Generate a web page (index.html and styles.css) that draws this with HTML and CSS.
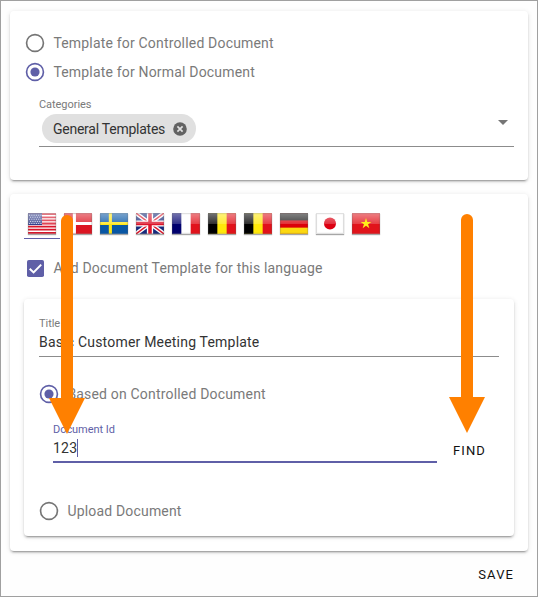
FILE: index.html
```html
<!DOCTYPE html>
<html lang="en">
<head>
<meta charset="utf-8">
<title>Document template</title>
<link rel="stylesheet" href="styles.css">
</head>
<body>
<svg class="defs" width="0" height="0" aria-hidden="true">
  <defs>
    <linearGradient id="gloss" x1="0" y1="0" x2="0" y2="1">
      <stop offset="0" stop-color="#fff" stop-opacity=".46"/>
      <stop offset=".5" stop-color="#fff" stop-opacity=".2"/>
      <stop offset=".5" stop-color="#fff" stop-opacity="0"/>
    </linearGradient>
    <g id="sheen">
      <rect width="27" height="20" fill="url(#gloss)"/>
      <rect x=".5" y=".5" width="26" height="19" fill="none" stroke="#666" stroke-opacity=".22"/>
    </g>
    <symbol id="radio-off" viewBox="0 0 24 24"><circle cx="12" cy="12" r="9.2" fill="none" stroke="currentColor" stroke-width="1.8"/></symbol>
    <symbol id="radio-on" viewBox="0 0 24 24"><circle cx="12" cy="12" r="9.2" fill="none" stroke="currentColor" stroke-width="1.8"/><circle cx="12" cy="12" r="5" fill="currentColor"/></symbol>
  </defs>
</svg>
<main class="frame">
  <section class="card scope">
    <label class="option"><svg class="radio"><use href="#radio-off"/></svg><span>Template for Controlled Document</span></label>
    <label class="option on"><svg class="radio"><use href="#radio-on"/></svg><span>Template for Normal Document</span></label>
    <div class="categories">
      <div class="label">Categories</div>
      <div class="select">
        <span class="chip"><span>General Templates</span><svg class="remove" viewBox="0 0 14 14"><circle cx="7" cy="7" r="6.8" fill="#626262"/><path d="M4.4 4.4l5.2 5.2M9.6 4.4l-5.2 5.2" stroke="#e0e0e0" stroke-width="1.7"/></svg></span>
        <svg class="caret" viewBox="0 0 10 5"><path d="M0 0h10L5 5z" fill="#757575"/></svg>
      </div>
    </div>
  </section>

  <section class="card languages">
    <nav class="tabs">
      <span class="tab active"><svg class="flag" viewBox="0 0 27 20"><rect width="27" height="20" fill="#fff"/><path d="M0 1h27M0 4h27M0 7h27M0 10h27M0 13h27M0 16h27M0 19h27" stroke="#d9162a" stroke-width="1.7"/><rect width="13.5" height="11.5" fill="#34408c"/><path d="M1 2h12M2 4h11M1 6h12M2 8h11M1 10h12" stroke="#c9cde6" stroke-width="1" stroke-dasharray="1 1.2"/><use href="#sheen"/></svg></span>
      <span class="tab"><svg class="flag" viewBox="0 0 27 20"><rect width="27" height="20" fill="#dc1522"/><path d="M10 0v20M0 10h27" stroke="#fff" stroke-width="3"/><use href="#sheen"/></svg></span>
      <span class="tab"><svg class="flag" viewBox="0 0 27 20"><rect width="27" height="20" fill="#0857a5"/><path d="M10 0v20M0 10h27" stroke="#ffe616" stroke-width="3"/><use href="#sheen"/></svg></span>
      <span class="tab"><svg class="flag" viewBox="0 0 27 20"><rect width="27" height="20" fill="#172a7c"/><path d="M0 0l27 20M27 0L0 20" stroke="#fff" stroke-width="4"/><path d="M0 0l27 20M27 0L0 20" stroke="#d9182c" stroke-width="1.5"/><path d="M13.5 0v20M0 10h27" stroke="#fff" stroke-width="6"/><path d="M13.5 0v20M0 10h27" stroke="#dc142a" stroke-width="3.4"/><use href="#sheen"/></svg></span>
      <span class="tab"><svg class="flag" viewBox="0 0 27 20"><rect width="27" height="20" fill="#fff"/><rect width="9" height="20" fill="#00006e"/><rect x="18" width="9" height="20" fill="#e1121b"/><use href="#sheen"/></svg></span>
      <span class="tab"><svg class="flag" viewBox="0 0 27 20"><rect width="27" height="20" fill="#ffe80a"/><rect width="9" height="20"/><rect x="18" width="9" height="20" fill="#e1121b"/><use href="#sheen"/></svg></span>
      <span class="tab"><svg class="flag" viewBox="0 0 27 20"><rect width="27" height="20" fill="#ffe80a"/><rect width="9" height="20"/><rect x="18" width="9" height="20" fill="#e1121b"/><use href="#sheen"/></svg></span>
      <span class="tab"><svg class="flag" viewBox="0 0 27 20"><rect width="27" height="20" fill="#db0009"/><rect width="27" height="7" fill="#1b1b1b"/><rect y="14" width="27" height="6" fill="#fcd810"/><use href="#sheen"/></svg></span>
      <span class="tab"><svg class="flag" viewBox="0 0 27 20"><rect width="27" height="20" fill="#fff"/><circle cx="13.5" cy="10" r="5.8" fill="#dc0012"/><use href="#sheen"/></svg></span>
      <span class="tab"><svg class="flag" viewBox="0 0 27 20"><rect width="27" height="20" fill="#e1141b"/><use href="#sheen"/><path d="M13.5 4.7l1.25 3.75h3.95l-3.2 2.35 1.25 3.8-3.25-2.35-3.25 2.35 1.25-3.8-3.2-2.35h3.95z" fill="#fff01b"/></svg></span>
    </nav>
    <label class="check"><svg class="box" viewBox="0 0 17 17"><rect width="17" height="17" rx="1.8" fill="#5f5fa7"/><path d="M2.7 8.7l3.9 3.7 7.6-7.8" fill="none" stroke="#fff" stroke-width="2"/></svg><span>Add Document Template for this language</span></label>

    <div class="card details">
      <div class="title-field">
        <div class="label">Title</div>
        <div class="value">Basic Customer Meeting Template</div>
      </div>
      <label class="option on based"><svg class="radio"><use href="#radio-on"/></svg><span>Based on Controlled Document</span></label>
      <div class="lookup">
        <div class="id-field">
          <div class="label">Document Id</div>
          <div class="value">123<i class="cursor"></i></div>
        </div>
        <span class="button">FIND</span>
      </div>
      <label class="option upload"><svg class="radio"><use href="#radio-off"/></svg><span>Upload Document</span></label>
    </div>
  </section>
  <footer class="actions"><span class="button">SAVE</span></footer>

  <svg class="arrow arrow-left" viewBox="0 0 36 219"><path d="M12 6a6 6 0 0 1 12 0v177h12L18 219 0 183h12z" fill="#ff8000"/></svg>
  <svg class="arrow arrow-right" viewBox="0 0 36 219"><path d="M12 6a6 6 0 0 1 12 0v177h12L18 219 0 183h12z" fill="#ff8000"/></svg>
</main>
</body>
</html>
```
FILE: styles.css
```css
* { box-sizing: border-box; }
body { margin: 0; font-family: Roboto, "Liberation Sans", sans-serif; font-size: 14px; color: #7a7a7a; background: #fff; }
svg { display: block; flex: none; }
.defs { position: absolute; }
.frame { position: relative; width: 538px; height: 597px; border: 1px solid #a0a0a0; padding: 10px 9px 0; background: #fefefe; }
.card { background: #fff; border-radius: 4px; box-shadow: 0 3px 1px -2px rgba(0,0,0,.2), 0 2px 2px 0 rgba(0,0,0,.14), 0 1px 5px 0 rgba(0,0,0,.12); }
.scope { height: 169px; padding: 17px 14px 0; }
.option { display: flex; align-items: center; gap: 7px; height: 29px; padding-left: .4px; letter-spacing: .18px; white-space: nowrap; }
.radio { width: 22px; height: 22px; color: #757575; }
.on .radio { color: #5f5fa7; }
.label { font-size: 11px; line-height: 14px; letter-spacing: -.05px; white-space: nowrap; }
.categories { margin: 12px 0 0 15px; }
.select { display: flex; justify-content: space-between; align-items: flex-start; height: 35px; padding: 2px 6px 0 3px; border-bottom: 1px solid #8c8c8c; }
.chip { display: flex; align-items: center; justify-content: space-between; width: 154px; height: 29px; padding: 0 8.6px 0 11px; border-radius: 15px; background: #e0e0e0; color: #333; letter-spacing: -.25px; white-space: nowrap; }
.remove { width: 14px; height: 14px; }
.caret { width: 10px; height: 5px; margin-top: 6px; }
.languages { height: 357px; margin-top: 14px; padding: 17px 14px 0; }
.tabs { display: flex; height: 28px; }
.tab { width: 36px; height: 28px; padding: 2px 0 0 4.4px; }
.tab.active { border-bottom: 1px solid #5f5fa7; }
.flag { width: 28px; height: 21px; box-shadow: 0 1px 1px rgba(0,0,0,.35); }
.check { display: flex; align-items: center; gap: 9.4px; height: 22px; margin: 18px 0 0 3px; letter-spacing: .18px; white-space: nowrap; }
.box { width: 17px; height: 17px; }
.details { height: 237px; margin-top: 20px; padding: 17px 15px 0 14px; }
.title-field { height: 41px; margin-left: 1px; border-bottom: 1px solid #8c8c8c; }
.value { display: flex; align-items: center; color: #333; white-space: nowrap; letter-spacing: .2px; }
.title-field .label { height: 15px; padding-top: 1px; }
.title-field .value { height: 22px; }
.based { margin-top: 22px; }
.lookup { display: flex; justify-content: space-between; height: 53px; padding: 0 14px 0 15px; margin-top: 14px; }
.id-field { width: 384px; height: 41px; border-bottom: 2px solid #5f5fa7; color: #5f5fa7; }
.id-field .label { padding-top: 1px; height: 15px; }
.id-field .value { height: 22px; }
.cursor { width: 1px; height: 18px; background: #5f5fa7; }
.button { font-size: 13px; line-height: 20px; letter-spacing: 1.1px; font-weight: 400; color: #111; }
.lookup .button { margin-top: 19px; margin-right: -1px; }
.upload { margin-top: 21px; }
.actions { display: flex; justify-content: flex-end; padding: 14px 14px 0 0; }
.arrow { position: absolute; width: 36px; height: 219px; top: 213px; }
.arrow-left { left: 48px; top: 214px; }
.arrow-right { left: 448px; }
```
